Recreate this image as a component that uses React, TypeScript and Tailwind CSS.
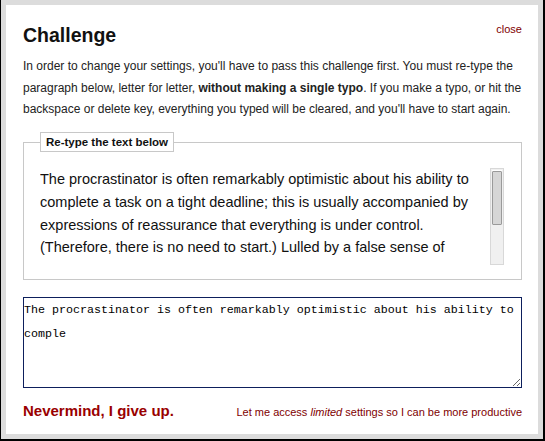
import React from "react";

const passage =
  "The procrastinator is often remarkably optimistic about his ability to complete a task on a tight deadline; this is usually accompanied by expressions of reassurance that everything is under control. (Therefore, there is no need to start.) Lulled by a false sense of security, time passes. At some point, he crosses over what I call the \"safety zone.\"";

export default function App() {
  return (
    <div
      className="w-[545px] h-[441px] border-l border-r-2 border-b-2 border-black bg-white"
      style={{ fontFamily: '"Liberation Sans", Arial, sans-serif' }}
    >
      <div className="h-full border-[5px] border-[#dcdcdc] bg-white pl-[17px] pr-[16px] pt-[19px] flex flex-col">
        <div className="flex justify-between items-start">
          <h1 className="text-[19.5px] leading-[22px] font-bold text-[#111]">Challenge</h1>
          <a className="text-[11px] leading-[13px] text-[#800000] mt-[-1px] cursor-pointer">close</a>
        </div>
        <p className="mt-[10px] text-[12px] leading-[21.7px] text-[#222]">
          In order to change your settings, you'll have to pass this challenge first. You must re-type the paragraph below, letter for letter, <b>without making a single typo</b>. If you make a typo, or hit the backspace or delete key, everything you typed will be cleared, and you'll have to start again.
        </p>
        <fieldset className="mt-[11px] border border-[#c8c8c8] pl-[16px] pr-[16px] pb-[15px]">
          <legend className="ml-0 border border-[#c8c8c8] px-[5px] py-[2px] text-[11.5px] leading-[14px] font-bold text-[#111]">
            Re-type the text below
          </legend>
          <div className="mt-[15px] flex gap-[10px] h-[97px]">
            <div className="w-[440px] h-[92px] mt-[1px] overflow-hidden text-[14.5px] leading-[22.7px] text-[#111]">
              {passage}
            </div>
            <div className="w-[14px] h-[97px] mt-[1px] border border-[#d8d8d8] bg-[#f0f0f0] flex flex-col p-[1px]">
              <div className="h-[55px] bg-white flex justify-center">
                <div className="w-[10px] h-[54px] mt-[1px] bg-[#d6d6d6] border border-[#9a9a9a] rounded-[1px]" />
              </div>
            </div>
          </div>
        </fieldset>
        <textarea
          readOnly
          value={"The procrastinator is often remarkably optimistic about his ability to comple"}
          className="mt-[17px] w-full h-[91px] border border-[#0d1f5c] pt-0 px-0 pb-0 text-[11.67px] leading-[24px] text-black resize outline-none"
          style={{ fontFamily: '"Liberation Mono", "Courier New", monospace' }}
        />
        <div className="mt-[13px] flex justify-between items-baseline">
          <a className="text-[15px] leading-[20px] font-bold text-[#990000] cursor-pointer">Nevermind, I give up.</a>
          <a className="text-[11px] leading-[14px] text-[#800000] cursor-pointer">
            Let me access <i>limited</i> settings so I can be more productive
          </a>
        </div>
      </div>
    </div>
  );
}
